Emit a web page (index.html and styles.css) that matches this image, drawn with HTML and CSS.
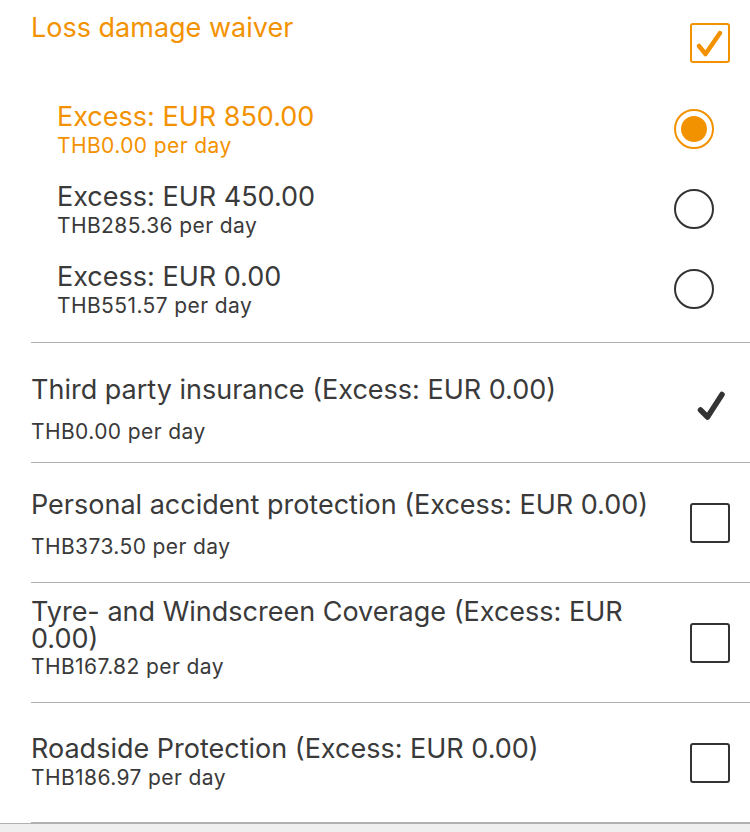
FILE: index.html
```html
<!DOCTYPE html>
<html lang="en">
<head>
<meta charset="utf-8">
<title>Extras</title>
<link rel="stylesheet" href="styles.css">
</head>
<body>
<div class="page">
  <section class="group">
    <div class="group-head">
      <h2 class="group-title">Loss damage waiver</h2>
      <span class="box box--on">
        <svg width="40" height="40" viewBox="0 0 40 40"><path d="M9 23 L15.5 31 L30 10" fill="none" stroke="#f39200" stroke-width="4.5" stroke-linecap="round" stroke-linejoin="round"/></svg>
      </span>
    </div>
    <ul class="options">
      <li class="option option--on">
        <div class="text">
          <div class="title">Excess: EUR 850.00</div>
          <div class="sub">THB0.00 per day</div>
        </div>
        <span class="radio radio--on"><span class="dot"></span></span>
      </li>
      <li class="option">
        <div class="text">
          <div class="title">Excess: EUR 450.00</div>
          <div class="sub">THB285.36 per day</div>
        </div>
        <span class="radio"></span>
      </li>
      <li class="option">
        <div class="text">
          <div class="title">Excess: EUR 0.00</div>
          <div class="sub">THB551.57 per day</div>
        </div>
        <span class="radio"></span>
      </li>
    </ul>
  </section>

  <div class="row row--spaced row--low">
    <div class="text">
      <div class="title">Third party insurance (Excess: EUR 0.00)</div>
      <div class="sub">THB0.00 per day</div>
    </div>
    <span class="tick">
      <svg width="40" height="40" viewBox="0 0 40 40"><path d="M10.5 27 L17.5 34 L32 11.5" fill="none" stroke="#333" stroke-width="5.5" stroke-linecap="round" stroke-linejoin="round"/></svg>
    </span>
  </div>

  <div class="row row--spaced">
    <div class="text">
      <div class="title">Personal accident protection (Excess: EUR 0.00)</div>
      <div class="sub">THB373.50 per day</div>
    </div>
    <span class="box"></span>
  </div>

  <div class="row row--high">
    <div class="text">
      <div class="title">Tyre- and Windscreen Coverage (Excess: EUR 0.00)</div>
      <div class="sub sub--tight">THB167.82 per day</div>
    </div>
    <span class="box"></span>
  </div>

  <div class="row">
    <div class="text">
      <div class="title">Roadside Protection (Excess: EUR 0.00)</div>
      <div class="sub">THB186.97 per day</div>
    </div>
    <span class="box"></span>
  </div>

  <div class="footer"></div>
</div>
</body>
</html>
```

FILE: styles.css
```css
* { box-sizing: border-box; }
html, body { margin: 0; padding: 0; background: #fff; }
body {
  font-family: "Inter", "Roboto", "Liberation Sans", sans-serif;
  color: #3a3a3a;
  width: 750px;
  height: 832px;
  overflow: hidden;
}
.page { display: flex; flex-direction: column; }

.group {
  margin-left: 31px;
  border-bottom: 1px solid #b0b0b0;
  padding-bottom: 13px;
}
.group-head {
  display: flex;
  justify-content: space-between;
  align-items: flex-start;
  height: 89px;
  padding-right: 20px;
}
.group-title {
  margin: 0;
  padding-top: 12px;
  font-size: 27px;
  font-weight: 400;
  line-height: 32px;
  color: #f39200;
}
.group-head .box { margin-top: 23px; }

.options { list-style: none; margin: 0; padding: 0 36px 0 26px; }
.option {
  height: 80px;
  display: flex;
  align-items: center;
  justify-content: space-between;
}
.option .text { padding-top: 2px; }
.option--on .title, .option--on .sub { color: #f39200; }

.title { font-size: 27px; line-height: 28px; }
.sub { font-size: 21px; line-height: 24px; margin-top: 3px; letter-spacing: 0.4px; }

.row {
  height: 120px;
  margin-left: 31px;
  padding-right: 20px;
  border-bottom: 1px solid #b0b0b0;
  display: flex;
  align-items: center;
  justify-content: space-between;
  gap: 30px;
}
.row .text { flex: 1; }
.row--spaced .sub { margin-top: 16px; }
.row--spaced .text { padding-top: 4px; }
.row--low .text { padding-top: 14px; }
.row--high .text { padding-bottom: 9px; }
.row--high .title { line-height: 27px; }
.sub--tight { margin-top: 3px; }

.box {
  width: 40px;
  height: 40px;
  flex: none;
  border: 2px solid #333;
  border-radius: 3px;
  display: block;
}
.box svg { display: block; margin: -2px; }
.box--on { border-color: #f39200; }

.tick { width: 40px; height: 40px; flex: none; display: block; }
.tick svg { display: block; }

.radio {
  width: 40px;
  height: 40px;
  flex: none;
  border: 2px solid #333;
  border-radius: 50%;
  display: flex;
  align-items: center;
  justify-content: center;
}
.radio--on { border-color: #f39200; }
.dot { width: 26px; height: 26px; border-radius: 50%; background: #f39200; }

.footer {
  height: 20px;
  background: #efefef;
  border-top: 1px solid #b0b0b0;
}
.row:last-of-type { border-bottom: none; }
```
